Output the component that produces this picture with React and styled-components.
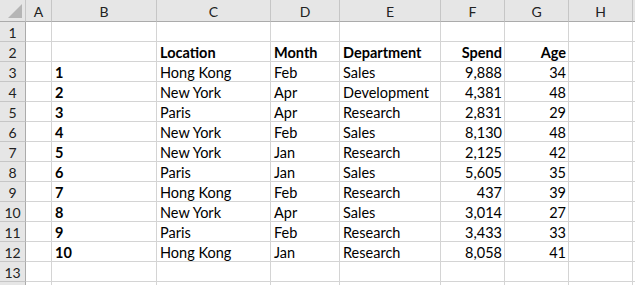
import React from 'react';
import styled, { createGlobalStyle } from 'styled-components';

const GlobalStyle = createGlobalStyle`
  html, body {
    margin: 0;
    padding: 0;
    background: #ffffff;
    overflow: hidden;
  }
  body {
    font-family: Lato, "Open Sans", sans-serif;
  }
`;

const columns = [
  { key: 'A', width: 26 },
  { key: 'B', width: 105 },
  { key: 'C', width: 114 },
  { key: 'D', width: 69 },
  { key: 'E', width: 101 },
  { key: 'F', width: 64 },
  { key: 'G', width: 64 },
  { key: 'H', width: 64 },
  { key: 'I', width: 64 },
];

const rows = [
  ['1', 'Hong Kong', 'Feb', 'Sales', '9,888', '34'],
  ['2', 'New York', 'Apr', 'Development', '4,381', '48'],
  ['3', 'Paris', 'Apr', 'Research', '2,831', '29'],
  ['4', 'New York', 'Feb', 'Sales', '8,130', '48'],
  ['5', 'New York', 'Jan', 'Research', '2,125', '42'],
  ['6', 'Paris', 'Jan', 'Sales', '5,605', '35'],
  ['7', 'Hong Kong', 'Feb', 'Research', '437', '39'],
  ['8', 'New York', 'Apr', 'Sales', '3,014', '27'],
  ['9', 'Paris', 'Feb', 'Research', '3,433', '33'],
  ['10', 'Hong Kong', 'Jan', 'Research', '8,058', '41'],
];

const Sheet = styled.div`
  display: grid;
  grid-template-columns: 26px ${columns.map((c) => `${c.width}px`).join(' ')};
  grid-auto-rows: 20px;
  grid-template-rows: 22px;
  width: 635px;
  height: 285px;
  overflow: hidden;
`;

const Corner = styled.div`
  position: relative;
  background: #e6e6e6;
  border-right: 1px solid #c6c6c6;
  border-bottom: 1px solid #ababab;
  box-sizing: border-box;

  &::after {
    content: '';
    position: absolute;
    right: 3px;
    bottom: 3px;
    width: 0;
    height: 0;
    border-left: 14px solid transparent;
    border-bottom: 14px solid #b5b5b5;
  }
`;

const ColHead = styled.div`
  display: flex;
  align-items: center;
  justify-content: center;
  background: #e6e6e6;
  border-right: 1px solid #c6c6c6;
  border-bottom: 1px solid #ababab;
  box-sizing: border-box;
  color: #222;
  font-size: 14px;
  padding-top: 1px;
`;

const RowHead = styled.div`
  display: flex;
  align-items: center;
  justify-content: center;
  background: #e6e6e6;
  border-right: 1px solid #ababab;
  border-bottom: 1px solid #c6c6c6;
  box-sizing: border-box;
  color: #222;
  font-size: 14px;
  padding-top: 1px;
`;

const Cell = styled.div`
  display: flex;
  align-items: center;
  justify-content: ${(p) => (p.$right ? 'flex-end' : 'flex-start')};
  padding: 1px 2px 0 3px;
  border-right: 1px solid #d4d4d4;
  border-bottom: 1px solid #d4d4d4;
  box-sizing: border-box;
  font-size: 14.5px;
  font-weight: ${(p) => (p.$bold ? 700 : 400)};
  color: #000;
  white-space: nowrap;
  overflow: visible;
`;

const headers = ['', 'Location', 'Month', 'Department', 'Spend', 'Age'];
const rightCols = [4, 5];

// label: the row number shown in the row header (the last row peeks in, so none)
const renderRow = (n, label, values, boldAll) => {
  const cells = [<RowHead key={`h${n}`}>{label}</RowHead>];
  columns.forEach((c, i) => {
    const v = i >= 1 && i <= 6 ? values[i - 1] : '';
    const vi = i - 1;
    cells.push(
      <Cell
        key={`${c.key}${n}`}
        $right={rightCols.includes(vi)}
        $bold={boldAll || vi === 0}
      >
        {v}
      </Cell>
    );
  });
  return cells;
};

const empty = ['', '', '', '', '', ''];

const App = () => {
  return (
    <>
      <GlobalStyle />
      <Sheet>
        <Corner />
        {columns.map((c) => (
          <ColHead key={c.key}>{c.key === 'I' ? '' : c.key}</ColHead>
        ))}
        {renderRow(1, '1', empty, false)}
        {renderRow(2, '2', headers, true)}
        {rows.map((r, i) => renderRow(i + 3, String(i + 3), r, false))}
        {renderRow(13, '13', empty, false)}
        {renderRow(14, '', empty, false)}
      </Sheet>
    </>
  );
};

export default App;
